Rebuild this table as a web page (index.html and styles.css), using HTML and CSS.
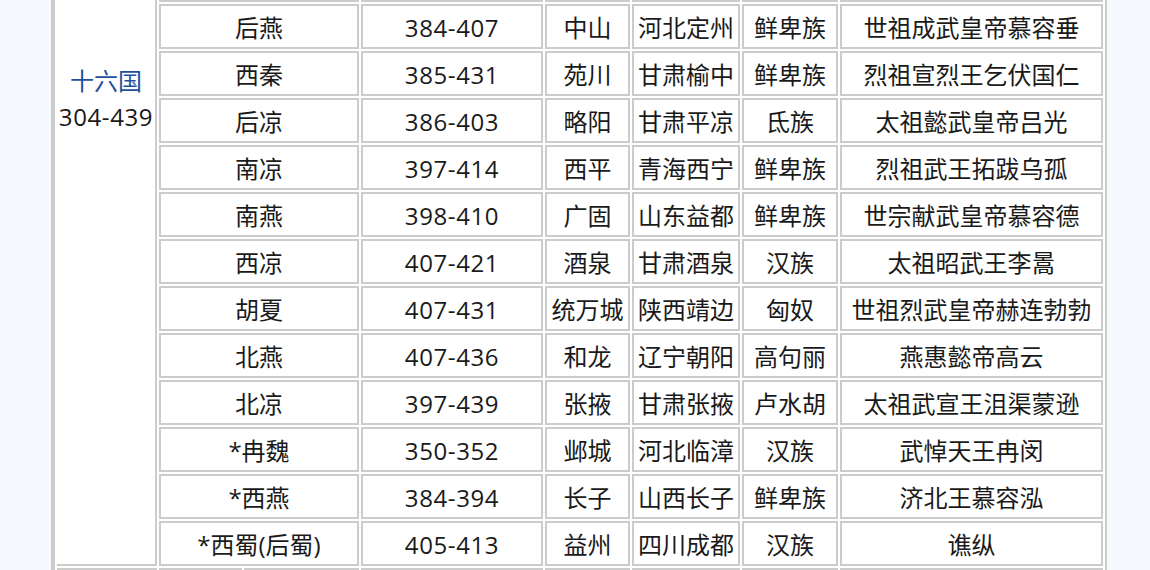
FILE: index.html
```html
<!DOCTYPE html>
<html lang="zh-CN">
<head>
<meta charset="utf-8">
<title>十六国</title>
<link rel="stylesheet" href="styles.css">
</head>
<body>
<table class="dyn">
  <colgroup>
    <col class="w0"><col class="w1a"><col class="w1b"><col class="w2"><col class="w3"><col class="w4"><col class="w5"><col class="w6">
  </colgroup>
  <tbody>
    <tr>
      <td class="grp" rowspan="13"><a class="link" href="#">十六国</a><br><span class="num">304-439</span></td>
      <td colspan="2">前秦</td><td class="num">350-394</td><td>长安</td><td>陕西西安</td><td>氐族</td><td>世祖宣昭帝苻坚</td>
    </tr>
    <tr><td colspan="2">后燕</td><td class="num">384-407</td><td>中山</td><td>河北定州</td><td>鲜卑族</td><td>世祖成武皇帝慕容垂</td></tr>
    <tr><td colspan="2">西秦</td><td class="num">385-431</td><td>苑川</td><td>甘肃榆中</td><td>鲜卑族</td><td>烈祖宣烈王乞伏国仁</td></tr>
    <tr><td colspan="2">后凉</td><td class="num">386-403</td><td>略阳</td><td>甘肃平凉</td><td>氐族</td><td>太祖懿武皇帝吕光</td></tr>
    <tr><td colspan="2">南凉</td><td class="num">397-414</td><td>西平</td><td>青海西宁</td><td>鲜卑族</td><td>烈祖武王拓跋乌孤</td></tr>
    <tr><td colspan="2">南燕</td><td class="num">398-410</td><td>广固</td><td>山东益都</td><td>鲜卑族</td><td>世宗献武皇帝慕容德</td></tr>
    <tr><td colspan="2">西凉</td><td class="num">407-421</td><td>酒泉</td><td>甘肃酒泉</td><td>汉族</td><td>太祖昭武王李暠</td></tr>
    <tr><td colspan="2">胡夏</td><td class="num">407-431</td><td>统万城</td><td>陕西靖边</td><td>匈奴</td><td>世祖烈武皇帝赫连勃勃</td></tr>
    <tr><td colspan="2">北燕</td><td class="num">407-436</td><td>和龙</td><td>辽宁朝阳</td><td>高句丽</td><td>燕惠懿帝高云</td></tr>
    <tr><td colspan="2">北凉</td><td class="num">397-439</td><td>张掖</td><td>甘肃张掖</td><td>卢水胡</td><td>太祖武宣王沮渠蒙逊</td></tr>
    <tr><td colspan="2">*冉魏</td><td class="num">350-352</td><td>邺城</td><td>河北临漳</td><td>汉族</td><td>武悼天王冉闵</td></tr>
    <tr><td colspan="2">*西燕</td><td class="num">384-394</td><td>长子</td><td>山西长子</td><td>鲜卑族</td><td>济北王慕容泓</td></tr>
    <tr><td colspan="2">*西蜀(后蜀)</td><td class="num">405-413</td><td>益州</td><td>四川成都</td><td>汉族</td><td>谯纵</td></tr>
    <tr>
      <td class="grp"><a class="link" href="#">南北朝</a></td>
      <td>南朝</td><td>宋</td><td class="num">420-479</td><td>建康</td><td>江苏南京</td><td>汉族</td><td>宋武帝刘裕</td>
    </tr>
  </tbody>
</table>
</body>
</html>
```
FILE: styles.css
```css
html, body {
  margin: 0;
  padding: 0;
  background: #f5f8fc;
}

body {
  font-family: "Open Sans", "Noto Sans CJK SC", sans-serif;
  color: #1a1a1a;
  font-size: 24px;
}

.dyn {
  margin: -47px 0 0 51px;
  width: 1056px;
  table-layout: fixed;
  border-collapse: separate;
  border-spacing: 2px;
  border: 2px solid #cccccc;
  border-left-width: 4px;
  background: #fff;
}

.w0 { width: 100px; }
.w1a { width: 83px; }
.w1b { width: 115px; }
.w2 { width: 182px; }
.w3 { width: 85px; }
.w4 { width: 108px; }
.w5 { width: 96px; }
.w6 { width: 263px; }

.dyn td {
  box-sizing: border-box;
  border: 2px solid #cccccc;
  padding: 4px 0 1px;
  line-height: 36px;
  text-align: center;
  vertical-align: middle;
  white-space: nowrap;
  overflow: hidden;
}

.dyn td.grp {
  border-left: 0;
  vertical-align: top;
  padding-top: 104px;
}

.num {
  letter-spacing: 0.6px;
}

.link {
  color: #1d4f9e;
  text-decoration: none;
}
```
